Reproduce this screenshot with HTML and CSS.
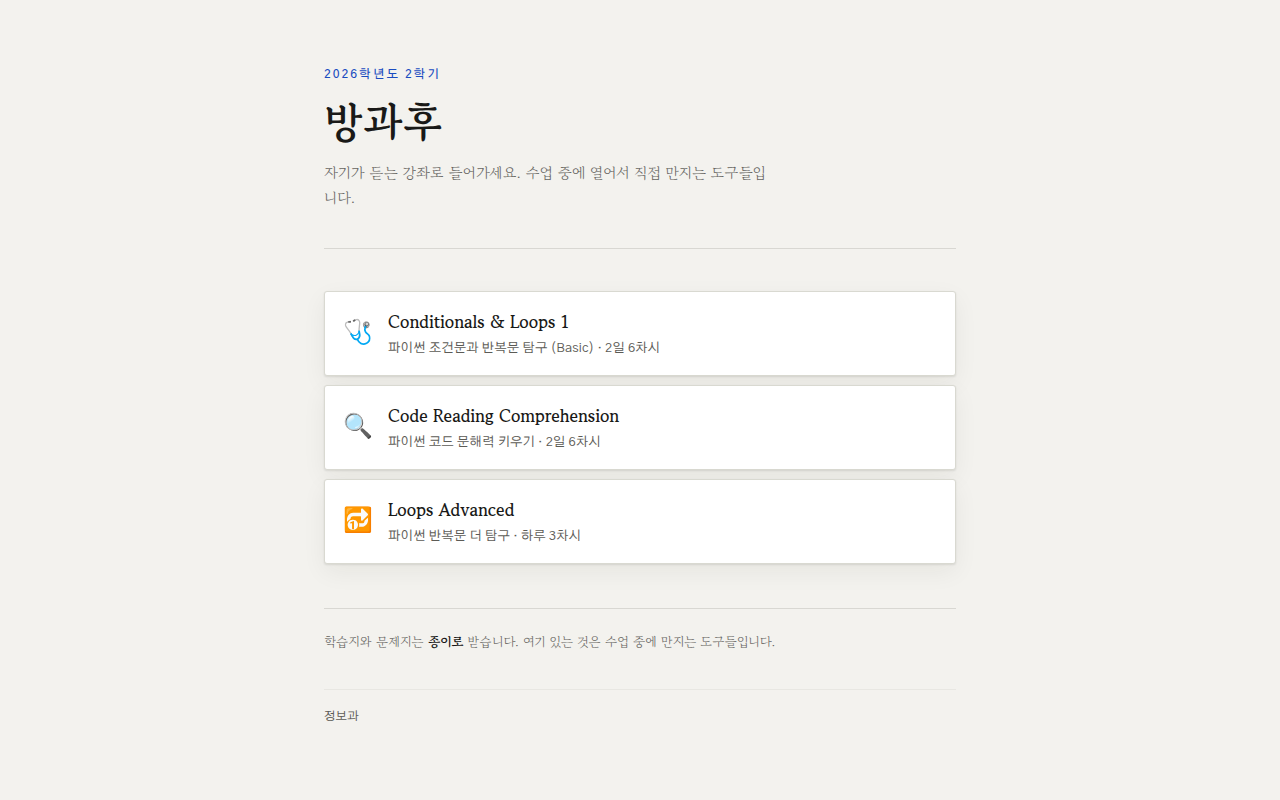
FILE: index.html
```html
<!DOCTYPE html>
<html lang="ko">
<head>
<meta charset="utf-8">
<meta name="viewport" content="width=device-width, initial-scale=1">
<title>방과후</title>
<link rel="stylesheet" href="styles.css">
</head>
<body>
<div class="page">
  <header class="intro">
    <p class="eyebrow">2026학년도 2학기</p>
    <h1 class="title">방과후</h1>
    <p class="lead">자기가 듣는 강좌로 들어가세요. 수업 중에 열어서 직접 만지는 도구들입니다.</p>
  </header>
  <main class="courses">
    <a class="course" href="#conditionals">
      <span class="icon" aria-hidden="true">🩺</span>
      <span class="text"><span class="name">Conditionals &amp; Loops 1</span><span class="detail">파이썬 조건문과 반복문 탐구 (Basic) · 2일 6차시</span></span>
    </a>
    <a class="course" href="#reading">
      <span class="icon" aria-hidden="true">🔍</span>
      <span class="text"><span class="name">Code Reading Comprehension</span><span class="detail">파이썬 코드 문해력 키우기 · 2일 6차시</span></span>
    </a>
    <a class="course" href="#advanced">
      <span class="icon" aria-hidden="true">🔂</span>
      <span class="text"><span class="name">Loops Advanced</span><span class="detail">파이썬 반복문 더 탐구 · 하루 3차시</span></span>
    </a>
  </main>
  <p class="note">학습지와 문제지는 <strong>종이로</strong> 받습니다. 여기 있는 것은 수업 중에 만지는 도구들입니다.</p>
  <footer class="footer">정보과</footer>
</div>
</body>
</html>
```
FILE: styles.css
```css
* { box-sizing: border-box; }
body {
  margin: 0;
  background: #f3f2ee;
  color: #191917;
  font-family: "Gowun Batang", "Noto Serif CJK KR", "Noto Sans CJK KR", serif;
}
p, h1 { margin: 0; }
.page {
  max-width: 680px;
  margin: 0 auto;
  padding: 64px 24px;
}
.intro {
  padding-bottom: 38px;
  border-bottom: 1px solid #d8d7d2;
}
.eyebrow {
  font: 500 12px/20px "Gothic A1", "Noto Sans CJK KR", sans-serif;
  letter-spacing: 2px;
  color: #1a4cc0;
}
.title {
  margin-top: 9px;
  font-size: 42px;
  line-height: 56px;
  font-weight: 700;
}
.lead {
  max-width: 450px;
  margin-top: 11px;
  font-size: 15px;
  line-height: 25px;
  color: #65645f;
}
.courses {
  display: grid;
  gap: 9px;
  padding: 42px 0 44px;
}
.course {
  display: flex;
  align-items: center;
  gap: 16px;
  padding: 17px 18px 16px;
  background: #fff;
  border: 1px solid #d9d9d1;
  border-radius: 3px;
  box-shadow: 0 1px 2px rgba(30, 30, 20, .1), 0 8px 24px rgba(30, 30, 20, .06);
  color: inherit;
  text-decoration: none;
}
.icon {
  width: 29px;
  padding-bottom: 8px;
  font-size: 24px;
  line-height: 32px;
}
.text { display: grid; gap: 4px; }
.name { font-size: 17px; line-height: 25px; font-weight: 700; }
.detail {
  font: 13px/21px "Gothic A1", "Noto Sans CJK KR", sans-serif;
  color: #5c5b56;
}
.note {
  padding: 22px 0 37px;
  border-top: 1px solid #d8d7d2;
  font-size: 13px;
  line-height: 21px;
  color: #65645f;
}
.note strong { color: #191917; }
.footer {
  padding-top: 16px;
  border-top: 1px solid #e8e7e2;
  font: 12px/20px "Gothic A1", "Noto Sans CJK KR", sans-serif;
  color: #5c5b56;
}
```
